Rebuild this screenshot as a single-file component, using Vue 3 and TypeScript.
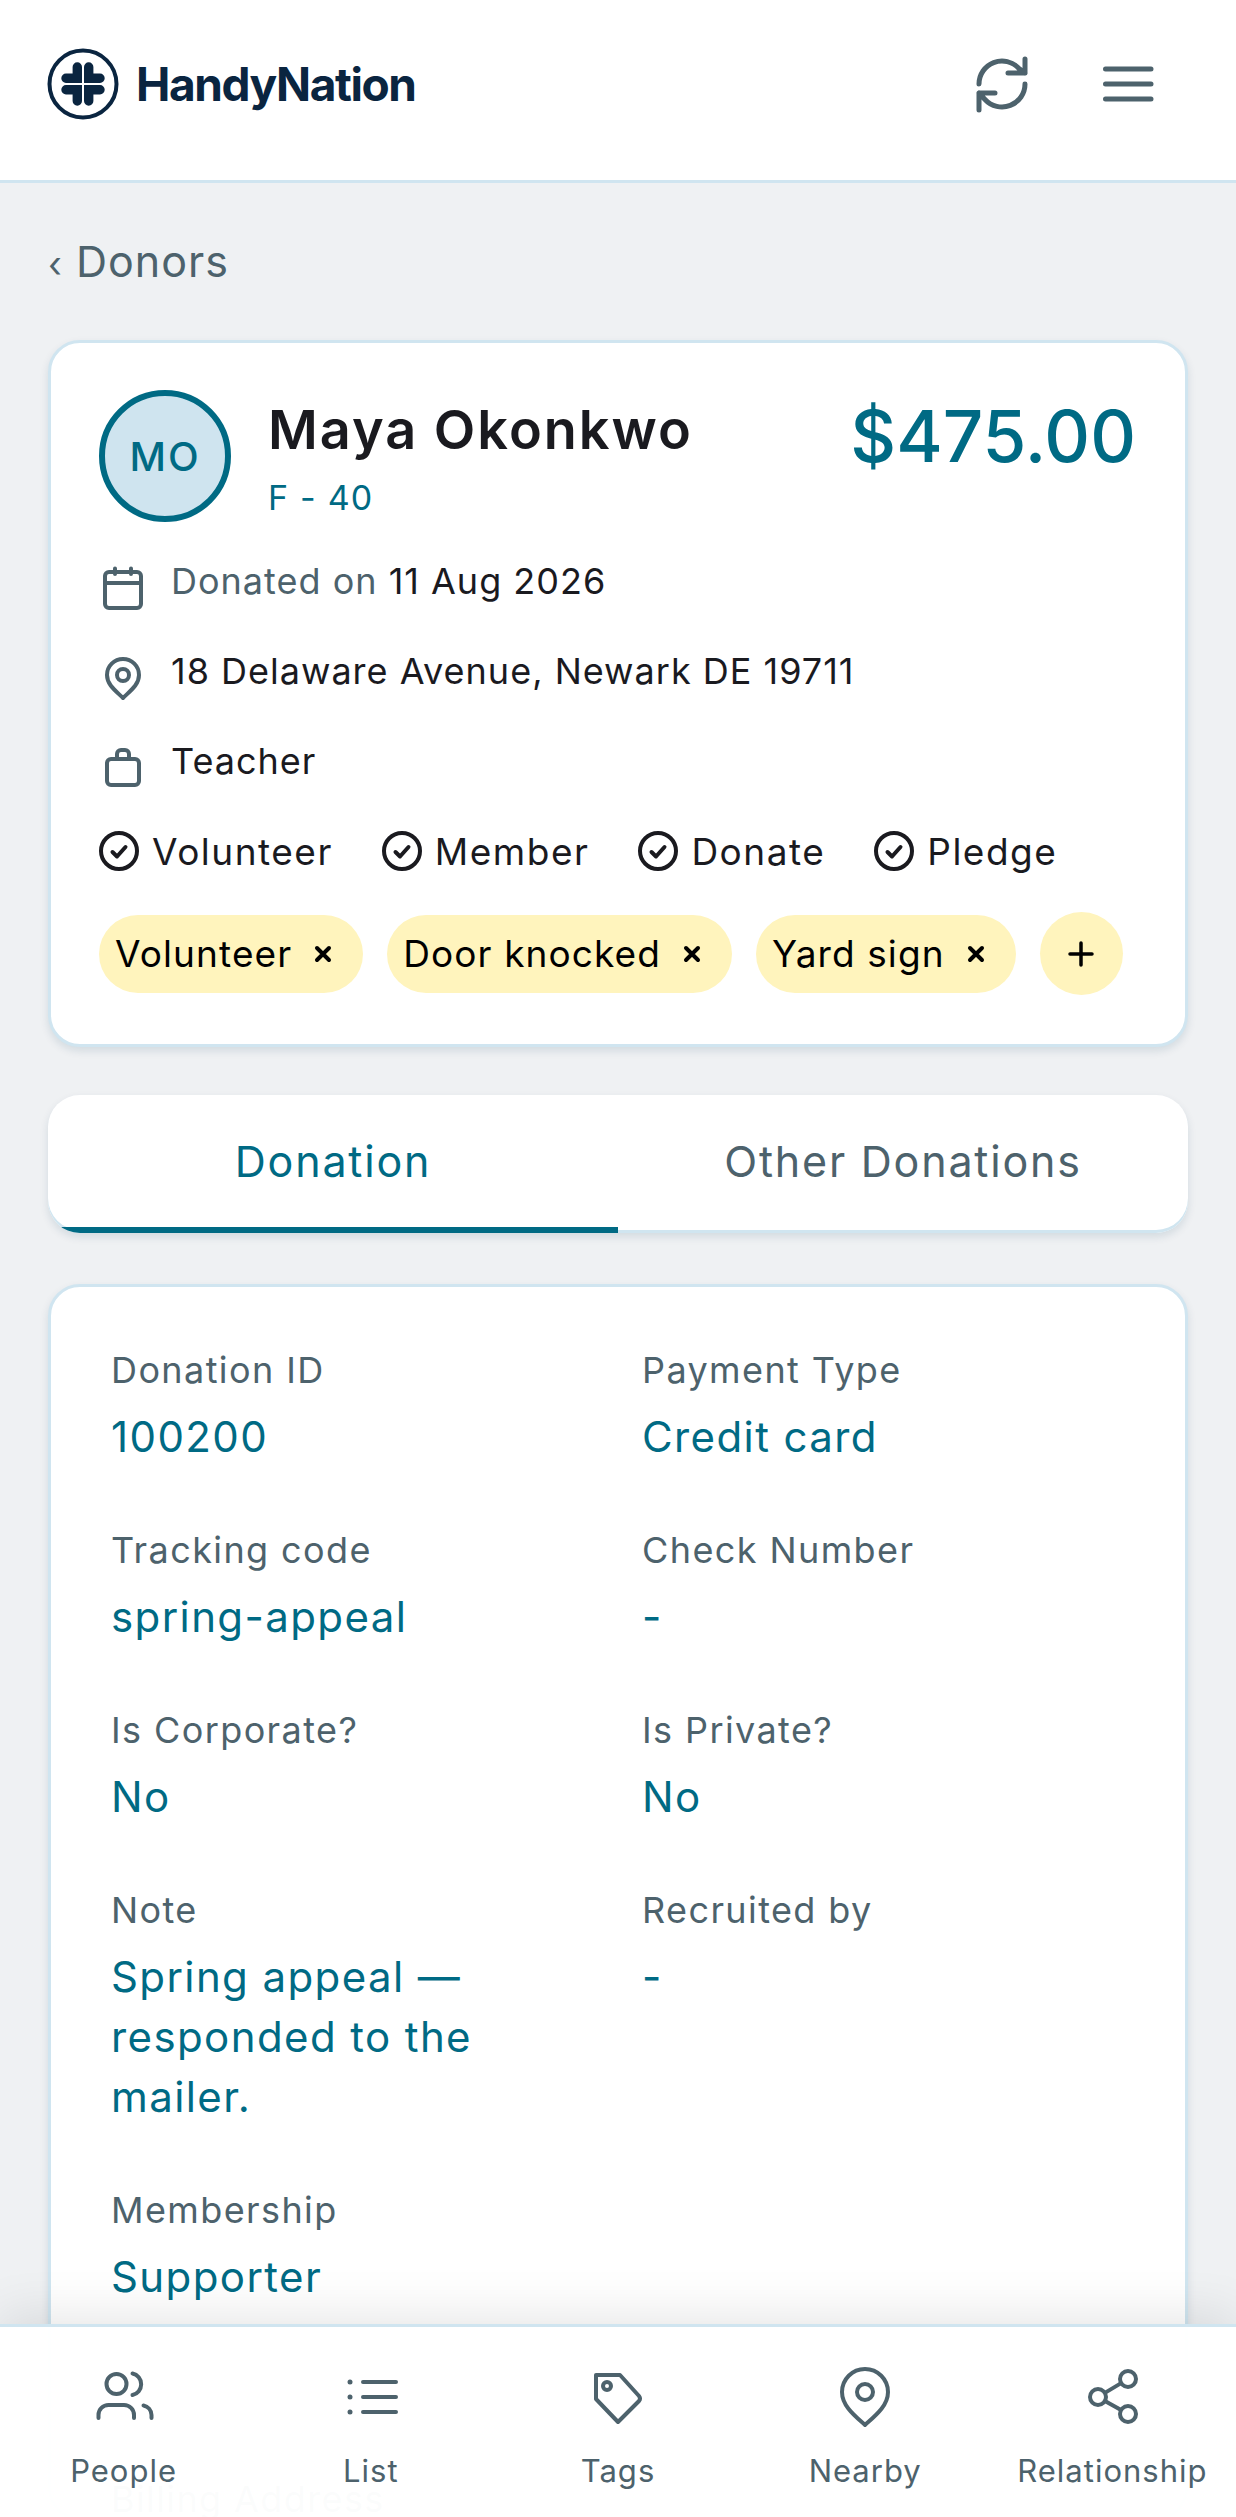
<script setup lang="ts">
const rows = [
  [{ label: 'Donation ID', value: '100200' }, { label: 'Payment Type', value: 'Credit card' }],
  [{ label: 'Tracking code', value: 'spring-appeal' }, { label: 'Check Number', value: '-' }],
  [{ label: 'Is Corporate?', value: 'No' }, { label: 'Is Private?', value: 'No' }],
  [{ label: 'Note', value: 'Spring appeal — responded to the mailer.' }, { label: 'Recruited by', value: '-' }],
  [{ label: 'Membership', value: 'Supporter' }, { label: '', value: '' }],
]
const checks = ['Volunteer', 'Member', 'Donate', 'Pledge']
const tags = ['Volunteer', 'Door knocked', 'Yard sign']
const logoTurns = [0, 90, 180, 270]
</script>

<template>
  <div class="app">
    <header class="topbar">
      <div class="brand">
        <svg class="logo" viewBox="-36 -36 72 72">
          <circle r="33.5" fill="none" stroke="#0a2540" stroke-width="4" />
          <path
            v-for="turn in logoTurns"
            :key="turn"
            :transform="`rotate(${turn})`"
            class="leaf"
            d="M-1-1H-17a4.7 4.7 0 0 1 0-9.4H-10.4V-17a4.7 4.7 0 0 1 9.4 0Z"
          />
        </svg>
        <span class="brand-name">HandyNation</span>
      </div>
      <div class="top-actions">
        <svg class="icon-64" viewBox="0 0 64 64">
          <path d="M9 32A23 23 0 0 1 49 16.500L55 21M55 7V21H38M55 32A23 23 0 0 1 15 47.500L9 41M25 41H9V58" />
        </svg>
        <svg class="icon-64" viewBox="0 0 64 64">
          <path d="M9.500 17H55M9.500 32H55M9.500 47H55" />
        </svg>
      </div>
    </header>

    <main class="content">
      <a class="back"><span class="chev">‹</span> Donors</a>

      <section class="card person">
        <div class="person-head">
          <div class="avatar">MO</div>
          <div class="who">
            <h1>Maya Okonkwo</h1>
            <p>F - 40</p>
          </div>
          <div class="amount">$475.00</div>
        </div>

        <div class="info">
          <svg class="icon-48" viewBox="0 0 48 48">
            <rect x="6" y="5" width="36" height="36" rx="4" />
            <path d="M6 16H42M16 1.500V7M32 1.500V7" />
          </svg>
          <span class="muted">Donated on <b>11 Aug 2026</b></span>
        </div>
        <div class="info">
          <svg class="icon-48" viewBox="0 0 48 48">
            <path d="M24 41C17 34 8 28 8 18A16 16 0 0 1 40 18C40 28 31 34 24 41Z" />
            <circle cx="24" cy="18" r="6" />
          </svg>
          <span>18 Delaware Avenue, Newark DE 19711</span>
        </div>
        <div class="info">
          <svg class="icon-48" viewBox="0 0 48 48">
            <rect x="8" y="12" width="32" height="26" rx="4" />
            <path d="M18 12V7a4 4 0 0 1 4-4h4a4 4 0 0 1 4 4v5" />
          </svg>
          <span>Teacher</span>
        </div>

        <div class="checks">
          <div v-for="c in checks" :key="c" class="check">
            <svg viewBox="0 0 40 40">
              <circle cx="20" cy="20" r="18" />
              <path d="M13.500 21L18 25.500L26.500 16" />
            </svg>
            <span>{{ c }}</span>
          </div>
        </div>

        <div class="tags">
          <div v-for="t in tags" :key="t" class="tag">
            <span>{{ t }}</span>
            <svg viewBox="0 0 18 18"><path d="M3 3L15 15M15 3L3 15" /></svg>
          </div>
          <button class="add">
            <svg viewBox="0 0 28 28"><path d="M14 3V25M3 14H25" /></svg>
          </button>
        </div>
      </section>

      <nav class="tabs">
        <div class="tab active">Donation</div>
        <div class="tab">Other Donations</div>
      </nav>

      <section class="card details">
        <div v-for="(row, i) in rows" :key="i" class="field-row">
          <div v-for="(f, j) in row" :key="j" class="field">
            <div class="label">{{ f.label }}</div>
            <div class="value">{{ f.value }}</div>
          </div>
        </div>
        <div class="label billing">Billing Address</div>
      </section>
    </main>

    <footer class="bottom-nav">
      <div class="nav-item">
        <svg class="icon-64" viewBox="0 0 64 64">
          <circle cx="24.500" cy="16" r="10" />
          <path d="M40.500 5.500A11 11 0 0 1 40.500 27M6.500 50V47A10 10 0 0 1 16.500 37H32A10 10 0 0 1 42 47V50M51.500 37.500A10 10 0 0 1 59.500 47V50" />
        </svg>
        <span>People</span>
      </div>
      <div class="nav-item">
        <svg class="icon-64" viewBox="0 0 64 64">
          <path d="M24 14H57M24 29H57M24 44H57" />
          <circle class="dot" cx="11" cy="14" r="2.500" />
          <circle class="dot" cx="11" cy="29" r="2.500" />
          <circle class="dot" cx="11" cy="44" r="2.500" />
        </svg>
        <span>List</span>
      </div>
      <div class="nav-item">
        <svg class="icon-64" viewBox="0 0 64 64">
          <path d="M10 7H34L53 28a4 4 0 0 1 0 5L32 54L10 31Z" />
          <circle cx="21" cy="18" r="4" />
        </svg>
        <span>Tags</span>
      </div>
      <div class="nav-item">
        <svg class="icon-64" viewBox="0 0 64 64">
          <path d="M32 57C22 48 9 38 9 24A23 23 0 0 1 55 24C55 38 42 48 32 57Z" />
          <circle cx="32" cy="24" r="8" />
        </svg>
        <span>Nearby</span>
      </div>
      <div class="nav-item">
        <svg class="icon-64" viewBox="0 0 64 64">
          <circle cx="48" cy="11" r="8" />
          <circle cx="18" cy="29" r="8" />
          <circle cx="48" cy="46" r="8" />
          <path d="M25.700 24.400L40.300 15.600M25.800 33.400L40.200 41.600" />
        </svg>
        <span>Relationship</span>
      </div>
    </footer>
  </div>
</template>

<style scoped>
.app {
  position: relative;
  height: 2517px;
  overflow: hidden;
  background: #eff1f3;
  color: #1a1a1f;
  font-family: Inter, "Liberation Sans", sans-serif;
}

svg {
  display: block;
  flex: none;
  fill: none;
  stroke: #4d626c;
  stroke-width: 4;
  stroke-linecap: round;
  stroke-linejoin: round;
  overflow: visible;
}

.icon-64 {
  width: 64px;
  height: 64px;
}

.icon-48 {
  width: 48px;
  height: 48px;
  margin-top: 14px;
}

.dot {
  fill: #4d626c;
  stroke: none;
}

.leaf {
  fill: #0a2540;
  stroke: none;
}

.topbar {
  height: 183px;
  box-sizing: border-box;
  background: #fff;
  border-bottom: 3px solid #d0e5f0;
  padding: 0 76px 12px 47px;
  display: flex;
  align-items: center;
  justify-content: space-between;
}

.brand {
  display: flex;
  align-items: center;
  gap: 17px;
}

.logo {
  width: 72px;
  height: 72px;
}

.brand-name {
  font-size: 46px;
  font-weight: 700;
  letter-spacing: -1.400px;
  color: #0a2540;
}

.top-actions {
  display: flex;
  gap: 62px;
}

.top-actions svg {
  stroke-width: 5;
}

.content {
  padding: 48px 48px 0;
}

.back {
  display: block;
  height: 60px;
  line-height: 60px;
  margin-bottom: 49px;
  font-size: 43px;
  letter-spacing: 1px;
  color: #4d626c;
}

.chev {
  font-size: 36px;
}

.card {
  background: #fff;
  border: 3px solid #d0e5f0;
  border-radius: 32px;
  box-shadow: 0 4px 8px rgba(0, 60, 90, 0.12);
}

.person {
  padding: 47px 49px 49px 48px;
}

.person-head {
  display: flex;
  align-items: flex-start;
  height: 132px;
  margin-bottom: 31px;
}

.avatar {
  width: 132px;
  height: 132px;
  box-sizing: border-box;
  border: 6px solid #006a84;
  border-radius: 50%;
  background: #cfe4ef;
  color: #006a84;
  font-size: 40px;
  font-weight: 500;
  letter-spacing: 2px;
  display: flex;
  align-items: center;
  justify-content: center;
  margin-right: 37px;
}

.who {
  flex: 1;
}

.who h1 {
  margin: 8px 0 0;
  font-size: 54px;
  line-height: 64px;
  font-weight: 600;
  letter-spacing: 2px;
  white-space: nowrap;
}

.who p {
  margin: 14px 0 0;
  font-size: 34px;
  line-height: 44px;
  color: #006a84;
  letter-spacing: 1.200px;
}

.amount {
  font-size: 71px;
  line-height: 92px;
  font-weight: 500;
  color: #006a84;
}

.info {
  display: flex;
  align-items: flex-start;
  gap: 24px;
  margin-bottom: 28px;
  font-size: 36px;
  line-height: 56px;
  letter-spacing: 1px;
}

.muted {
  color: #4d626c;
}

.muted b {
  font-weight: 400;
  color: #1a1a1f;
}

.checks {
  display: flex;
  gap: 49px;
  height: 56px;
  font-size: 37px;
  letter-spacing: 1.500px;
}

.check {
  display: flex;
  align-items: center;
  gap: 13px;
}

.check svg {
  width: 40px;
  height: 40px;
  stroke: #1a1a1f;
}

.tags {
  display: flex;
  align-items: center;
  gap: 24px;
  margin-top: 33px;
}

.tag {
  height: 78px;
  padding: 0 31px 0 16px;
  border-radius: 39px;
  background: #fff4bd;
  display: flex;
  align-items: center;
  gap: 22px;
  font-size: 37px;
  letter-spacing: 1.100px;
  color: #000;
}

.tag svg {
  width: 18px;
  height: 18px;
  stroke: #000;
}

.add {
  width: 83px;
  height: 83px;
  padding: 0;
  border: 0;
  border-radius: 50%;
  background: #fff4bd;
  display: flex;
  align-items: center;
  justify-content: center;
}

.add svg {
  width: 28px;
  height: 28px;
  stroke: #000;
  stroke-width: 3.500;
}

.tabs {
  margin-top: 48px;
  height: 138px;
  background: #fff;
  border-radius: 32px;
  box-shadow: inset 0 -3px 0 #d0e5f0, 0 4px 8px rgba(0, 60, 90, 0.12);
  overflow: hidden;
  display: flex;
}

.tab {
  flex: 1;
  display: flex;
  align-items: center;
  justify-content: center;
  font-size: 43px;
  letter-spacing: 1.800px;
  color: #4d626c;
  box-sizing: border-box;
  border-bottom: 6px solid transparent;
}

.tab.active {
  color: #006a84;
  border-bottom-color: #006a84;
}

.details {
  margin-top: 51px;
  padding: 59px 60px 0;
}

.field-row {
  display: grid;
  grid-template-columns: 491px 1fr;
  column-gap: 40px;
  margin-bottom: 59px;
}

.label {
  font-size: 36px;
  line-height: 48px;
  letter-spacing: 1.400px;
  color: #4d626c;
}

.value {
  margin-top: 13px;
  font-size: 42px;
  line-height: 60px;
  letter-spacing: 1.400px;
  color: #006a84;
}

.billing {
  margin-top: 174px;
  line-height: 36px;
}

.bottom-nav {
  position: absolute;
  left: 0;
  right: 0;
  bottom: 0;
  height: 193px;
  box-sizing: border-box;
  background: rgba(255, 255, 255, 0.98);
  border-top: 3px solid #d0e5f0;
  box-shadow: 0 -8px 48px rgba(0, 0, 0, 0.1);
  display: grid;
  grid-template-columns: repeat(5, 1fr);
  padding-top: 41px;
}

.nav-item {
  display: flex;
  flex-direction: column;
  align-items: center;
  font-size: 31px;
  color: #4d626c;
}

.nav-item span {
  margin-top: 19px;
  line-height: 40px;
  letter-spacing: 1px;
  white-space: nowrap;
}
</style>

<style>
body {
  background: #eff1f3;
}
</style>
